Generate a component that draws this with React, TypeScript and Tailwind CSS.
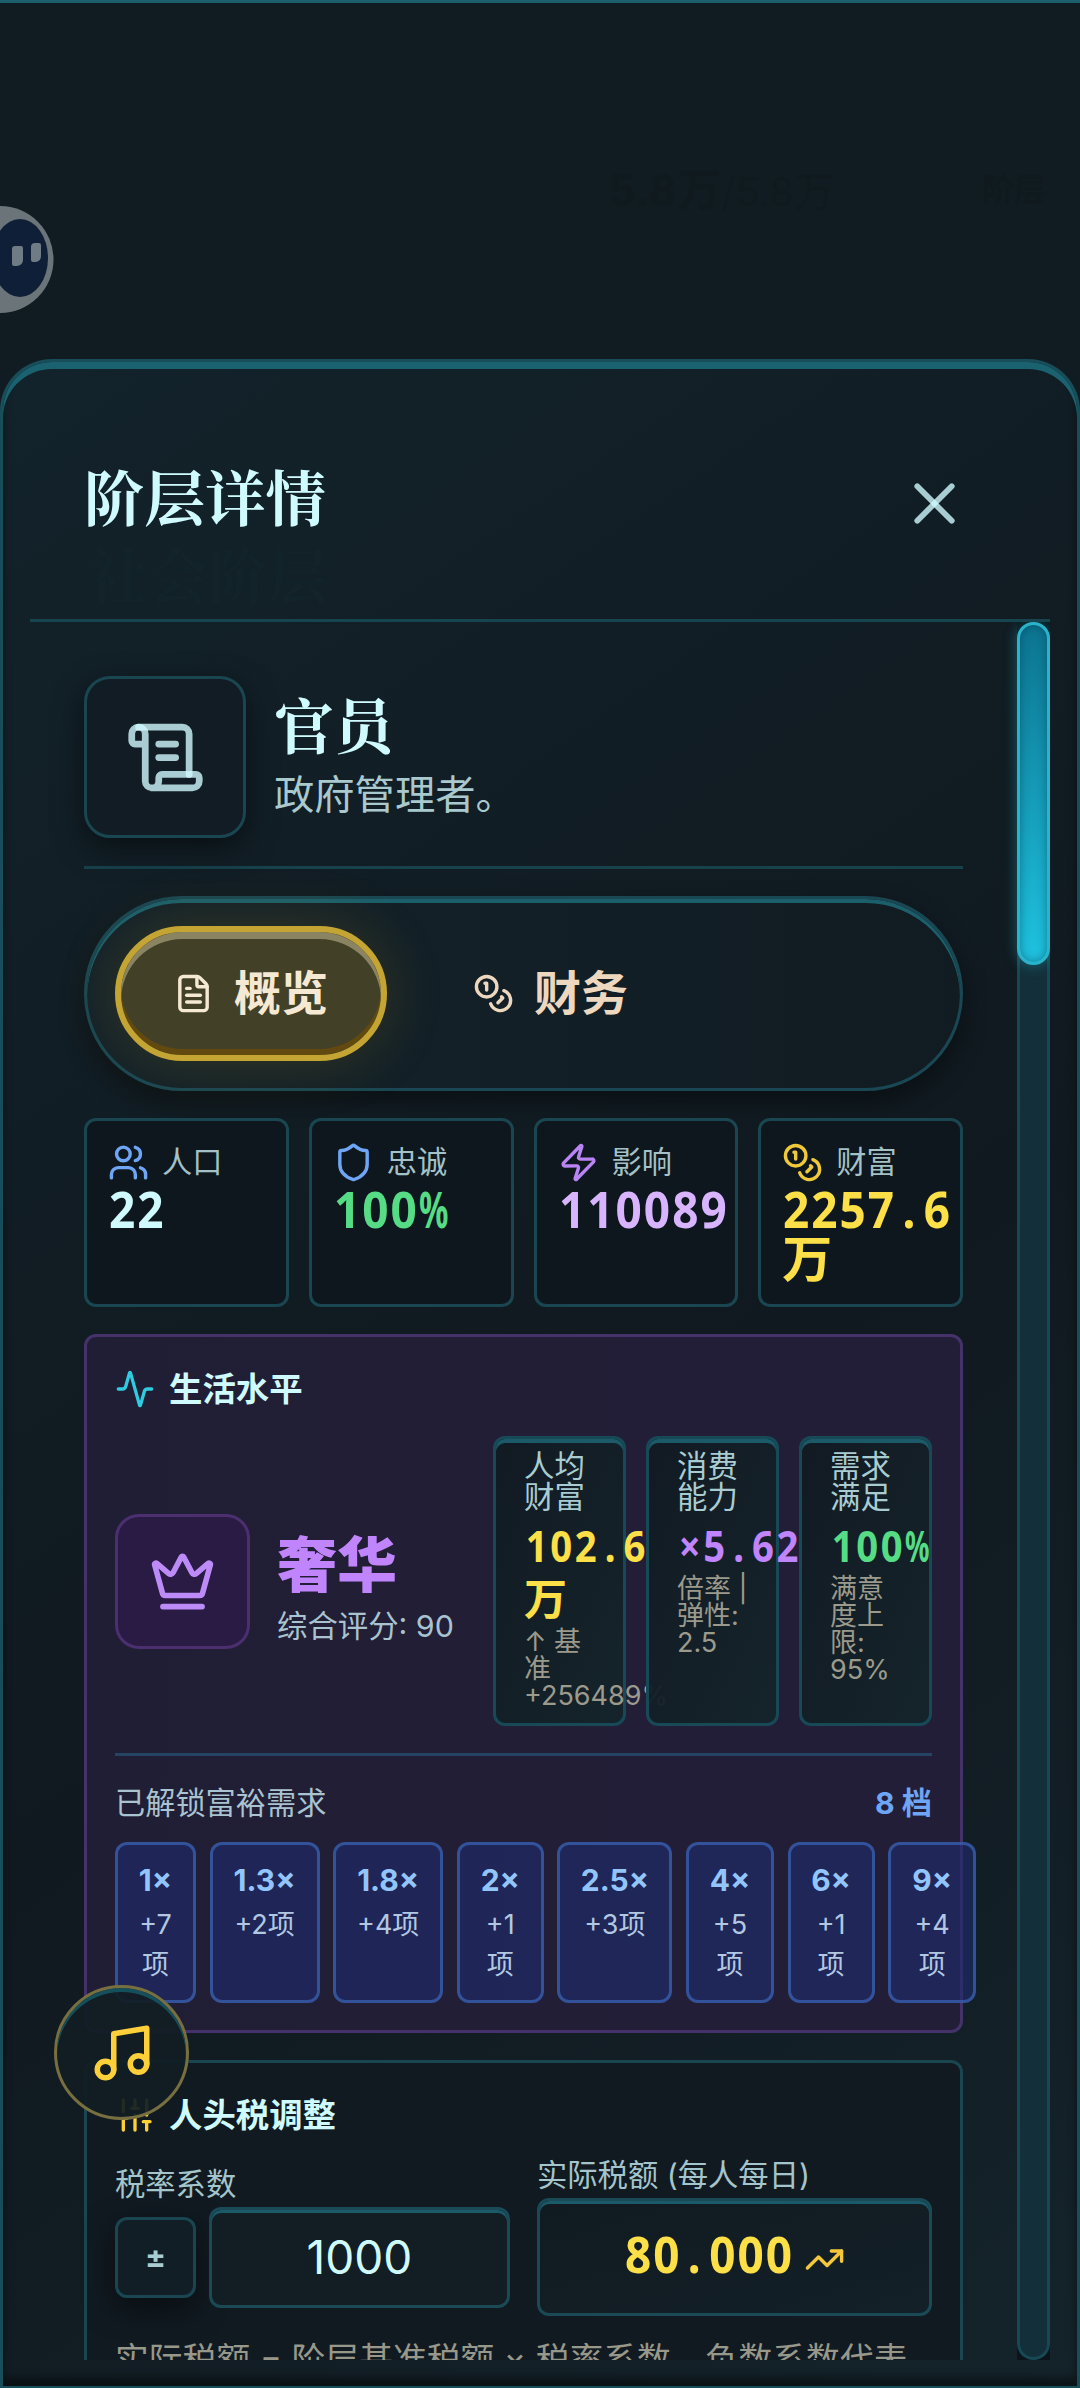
import type { ReactNode } from "react";
import {
  Activity,
  Crown,
  FileText,
  Music,
  ScrollText,
  Shield,
  SlidersVertical,
  TrendingUp,
  Users,
  X,
  Zap,
} from "lucide-react";

const CoinsIcon = ({ className }: { className?: string }) => (
  <svg
    className={className}
    viewBox="0 0 24 24"
    fill="none"
    stroke="currentColor"
    strokeWidth="2"
    strokeLinecap="round"
    strokeLinejoin="round"
  >
    <circle cx="8" cy="8" r="6" />
    <path d="M18.09 10.37A6 6 0 1 1 10.34 18" />
    <path d="M7 6h1v4" />
    <path d="m16.71 13.88.7.71-2.82 2.82" />
  </svg>
);

// narrow digits on a fixed pitch, the dot takes a full cell
const Digits = ({ value, small }: { value: string; small?: boolean }) => {
  const [whole, rest] = value.split(".");
  return (
    <span
      className={
        small
          ? "inline-block origin-left scale-x-90 whitespace-nowrap pl-[2px] font-['Noto_Sans'] text-[42.5px] font-bold tracking-[2.9px]"
          : "inline-block origin-left scale-x-90 whitespace-nowrap pl-[1px] font-['Noto_Sans'] text-[51px] font-bold tracking-[2.3px]"
      }
    >
      {whole}
      {rest && (
        <>
          <span className={small ? "px-[6px]" : "px-[7px]"}>.</span>
          {rest}
        </>
      )}
    </span>
  );
};

const Percent = ({ small }: { small?: boolean }) => (
  <span
    className={
      small
        ? "-ml-[9px] inline-block origin-left scale-x-[0.64] font-['Noto_Sans'] text-[42.5px] font-bold"
        : "-ml-[9px] inline-block origin-left scale-x-[0.64] font-['Noto_Sans'] text-[51px] font-bold"
    }
  >
    %
  </span>
);

const stats = [
  {
    label: "人口",
    icon: <Users className="size-[41px] text-[#6ea5f5]" />,
    color: "text-[#cffafe]",
    value: <Digits value="22" />,
  },
  {
    label: "忠诚",
    icon: <Shield className="size-[41px] text-[#6ea5f5]" />,
    color: "text-[#55dc85]",
    value: (
      <>
        <Digits value="100" />
        <Percent />
      </>
    ),
  },
  {
    label: "影响",
    icon: <Zap className="size-[41px] text-[#b985f5]" />,
    color: "text-[#d8b4fe]",
    value: <Digits value="110089" />,
  },
  {
    label: "财富",
    icon: <CoinsIcon className="size-[41px] text-[#f0c93a]" />,
    color: "text-[#fde047]",
    value: (
      <>
        <Digits value="2257.6" />
        <br />万
      </>
    ),
  },
];

const needs = [
  { level: "1×", count: "+7", wrap: true, width: "w-[81px]" },
  { level: "1.3×", count: "+2", wrap: false, width: "w-[110px]" },
  { level: "1.8×", count: "+4", wrap: false, width: "w-[110px]" },
  { level: "2×", count: "+1", wrap: true, width: "w-[87px]" },
  { level: "2.5×", count: "+3", wrap: false, width: "w-[115px]" },
  { level: "4×", count: "+5", wrap: true, width: "w-[88px]" },
  { level: "6×", count: "+1", wrap: true, width: "w-[87px]" },
  { level: "9×", count: "+4", wrap: true, width: "w-[88px]" },
];

const LivingCard = ({
  label,
  color,
  value,
  note,
}: {
  label: ReactNode;
  color: string;
  value: ReactNode;
  note: ReactNode;
}) => (
  <div className="relative w-[133px] rounded-xl border-3 border-[#174957] bg-linear-to-br from-[#111a21]/95 to-[#14242b]/95 pt-[12px] pl-[28px] shadow-[inset_0_4px_0_#1b5a69]">
    <div className="text-[30.4px] leading-[31px] whitespace-nowrap text-[#a9ccd3]">
      {label}
    </div>
    <div
      className={`mt-[6px] text-[43px] leading-[53px] font-bold whitespace-nowrap ${color}`}
    >
      {value}
    </div>
    <div className="mt-[2px] text-[27px] leading-[27px] whitespace-nowrap text-[#9b9a8c]">
      {note}
    </div>
  </div>
);

const LivingPanel = () => (
  <section className="shrink-0 rounded-xl border-3 border-[#46326a] bg-linear-to-r from-[#201e35] to-[#231e38] p-[28px] pb-[27px]">
    <div className="mb-[23px] flex h-[48px] items-center gap-[14px]">
      <Activity className="size-[40px] text-[#2fcbe0]" />
      <h3 className="text-[33.4px] font-bold text-[#cffafe]">生活水平</h3>
    </div>
    <div className="flex h-[290px] items-center">
      <div className="flex size-[135px] shrink-0 items-center justify-center rounded-3xl border-3 border-[#4b2f6e] bg-[#2a1b44]">
        <Crown className="size-[67px] text-[#bd8bf7]" />
      </div>
      <div className="ml-[27px] flex-1 pt-[17px]">
        <p className="text-[60px] leading-[72px] font-black text-[#c084fc]">
          奢华
        </p>
        <p className="text-[30.4px] leading-[50px] whitespace-nowrap text-[#a9c3d1]">
          综合评分: 90
        </p>
      </div>
      <div className="flex h-full shrink-0 gap-[20px]">
        <LivingCard
          label={
            <>
              人均
              <br />
              财富
            </>
          }
          color="text-[#fde047]"
          value={
            <>
              <Digits value="102.6" small />
              <br />万
            </>
          }
          note={
            <>
              ↑ 基<br />准<br />
              +256489%
            </>
          }
        />
        <LivingCard
          label={
            <>
              消费
              <br />
              能力
            </>
          }
          color="text-[#c084fc]"
          value={<Digits value="×5.62" small />}
          note={
            <>
              倍率 |<br />
              弹性:
              <br />
              2.5
            </>
          }
        />
        <LivingCard
          label={
            <>
              需求
              <br />
              满足
            </>
          }
          color="text-[#55dc85]"
          value={
            <>
              <Digits value="100" small />
              <Percent small />
            </>
          }
          note={
            <>
              满意
              <br />
              度上
              <br />
              限:
              <br />
              95%
            </>
          }
        />
      </div>
    </div>
    <div className="mt-[27px] border-t-3 border-[#254463] pt-[28px]">
      <div className="mb-[18px] flex h-[40px] items-center justify-between text-[30.2px]">
        <span className="text-[#a9c3d1]">已解锁富裕需求</span>
        <span className="font-bold text-[#6ea5f5]">8 档</span>
      </div>
      <div className="flex h-[161px] gap-[13.6px]">
        {needs.map((item) => (
          <div
            key={item.level}
            className={`shrink-0 rounded-xl border-3 border-[#3b65b8]/70 bg-[#1f2b6a]/65 pt-[15px] text-center leading-[40px] ${item.width}`}
          >
            <p className="text-[30px] font-bold text-[#93c5fd]">{item.level}</p>
            <p className="mt-[5px] text-[27px] text-[#b2c8e2]">
              {item.count}
              {item.wrap && <br />}项
            </p>
          </div>
        ))}
      </div>
    </div>
  </section>
);

const TaxPanel = () => (
  <section className="h-[500px] shrink-0 rounded-xl border-3 border-[#194651] bg-[#111a21] p-[28px]">
    <div className="mb-[15px] flex h-[48px] items-center gap-[14px]">
      <SlidersVertical className="size-[40px] text-[#fdd035]" />
      <h3 className="text-[33.4px] font-bold text-[#cffafe]">人头税调整</h3>
    </div>
    <div className="flex items-center gap-[27px]">
      <div className="w-[395px]">
        <p className="mb-[3px] pt-[1px] text-[30.3px] leading-[40px] text-[#a4c5cb]">
          税率系数
        </p>
        <div className="flex items-center gap-[13px]">
          <button className="size-[81px] shrink-0 rounded-xl border-3 border-[#194651] bg-[#121e25] text-[31px] font-bold text-[#a9ccd2] shadow-[0_10px_30px_rgba(0,0,0,0.5)]">
            ±
          </button>
          <div className="flex h-[101px] flex-1 items-center justify-center rounded-xl border-3 border-[#194a56] bg-[#121d24] text-[46px] text-[#cffafe] shadow-[inset_0_3px_0_#1b5a69]">
            1000
          </div>
        </div>
      </div>
      <div className="w-[395px]">
        <p className="mb-[3px] pt-[1px] text-[30.3px] leading-[40px] text-[#a4c5cb]">
          实际税额 (每人每日)
        </p>
        <div className="flex h-[118px] items-center rounded-xl border-3 border-[#194a56] bg-linear-to-br from-[#111a21] to-[#132027] pl-[84px] leading-none text-[#fde047] shadow-[inset_0_3px_0_#1b5a69]">
          <span className="pb-[8px]">
            <Digits value="80.000" />
          </span>
          <TrendingUp className="mt-[5px] -ml-[9px] size-[41px] text-[#f5c83c]" />
        </div>
      </div>
    </div>
    <p className="mt-[17px] text-[33.8px] leading-[54px] whitespace-nowrap text-[#97978a]">
      实际税额 = 阶层基准税额 × 税率系数，负数系数代表
    </p>
  </section>
);

// dimmed game screen that stays visible above the sheet
const Backdrop = () => (
  <div className="relative h-[359px] shrink-0 overflow-hidden border-t-3 border-[#1b5f6c]">
    <svg
      className="absolute top-0 left-0"
      width="60"
      height="320"
      viewBox="0 3 60 320"
    >
      <circle cx="0" cy="259.5" r="53.5" fill="#6b7479" />
      <ellipse cx="20" cy="258" rx="28" ry="39" fill="#0f1f37" />
      <path
        d="M15 246h6q2 0 2 2v12q0 5-6 6h-3q-2 0-2-2v-15q0-3 3-3z"
        fill="#6f7c85"
      />
      <path
        d="M35 243h4q2 0 2 2v11q0 5-5 6h-3q-2 0-2-2v-13q0-4 4-4z"
        fill="#6f7c85"
      />
    </svg>
    <div className="absolute top-[154px] left-[608px] text-[44px] font-bold whitespace-nowrap text-[#0f191e]">
      5.8万<span className="text-[40px] font-normal">/5.8万</span>
    </div>
    <div className="absolute top-[163px] left-[982px] text-[32px] font-bold whitespace-nowrap text-[#0f191e]">
      阶层
    </div>
  </div>
);

const App = () => {
  return (
    <div className="relative flex h-[2388px] w-[1080px] flex-col overflow-hidden bg-[#111c22] font-['Inter','Noto_Sans_CJK_SC',sans-serif]">
      <Backdrop />

      {/* bottom sheet */}
      <div className="flex flex-1 flex-col rounded-t-[52px] border-3 border-b-2 border-[#184d5a] bg-linear-[145deg,#13232b_0%,#111c23_35%,#10191f_55%,#14232a_100%] px-[27px] shadow-[inset_0_7px_0_#1b6270,inset_0_-8px_8px_rgba(0,0,0,0.45)]">
        <header className="relative flex h-[260px] shrink-0 items-center justify-between border-b-3 border-[#17454f] pt-[20px] pr-[81px] pl-[54px]">
          <h2 className="pb-[11px] font-['Noto_Serif_CJK_SC','Noto_Serif_SC','Source_Han_Serif_SC','Noto_Sans_CJK_SC',serif] text-[60.5px] leading-[70px] font-bold text-[#cffafe]">
            阶层详情
          </h2>
          <X className="mt-[5px] size-[69px] text-[#cffafe]/80" />
          <span className="absolute top-[176px] left-[58px] font-['Noto_Serif_CJK_SC','Noto_Serif_SC','Source_Han_Serif_SC','Noto_Sans_CJK_SC',serif] text-[60px] leading-[70px] font-bold text-[#13232a]">
            社会阶层
          </span>
        </header>

        <div className="flex h-[1738px] overflow-hidden">
          <main className="flex w-[987px] flex-col gap-[27px] px-[54px] pt-[54px]">
            <div className="flex shrink-0 gap-[28px] border-b-3 border-[#17414b] pb-[28px]">
              <div className="flex size-[162px] items-center justify-center rounded-[26px] border-3 border-[#194650] bg-[#111c24] shadow-[0_10px_30px_rgba(0,0,0,0.5)]">
                <ScrollText className="size-[81px] text-[#cffafe]/80" />
              </div>
              <div className="pt-[10px]">
                <h2 className="font-['Noto_Serif_CJK_SC','Noto_Serif_SC','Source_Han_Serif_SC','Noto_Sans_CJK_SC',serif] text-[60px] leading-[75px] font-bold text-[#cffafe]">
                  官员
                </h2>
                <p className="mt-[4px] text-[40.3px] leading-[60px] text-[#a9c9cf]">
                  政府管理者。
                </p>
              </div>
            </div>

            {/* tabs */}
            <div className="flex h-[195px] shrink-0 items-center gap-[28px] rounded-full border-3 border-[#194753] bg-linear-to-r from-[#13222a] to-[#111c22] pl-[28px] shadow-[inset_0_4px_0_#1b5f6b,0_10px_24px_rgba(0,0,0,0.4)]">
              <button className="flex h-[135px] w-[272px] items-center gap-[20px] rounded-full border-6 border-[#c4a433] bg-[#434028] pl-[52px] text-[47px] font-bold text-[#f6e9d3] shadow-[inset_0_7px_0_#8a8462,inset_0_-6px_0_#61490f,0_0_60px_rgba(200,150,20,0.2)]">
                <FileText className="size-[41px] shrink-0" />
                <span className="whitespace-nowrap">概览</span>
              </button>
              <button className="flex h-[135px] items-center gap-[20px] pl-[58px] text-[47px] font-bold text-[#edd8bf]">
                <CoinsIcon className="size-[41px]" />
                财务
              </button>
            </div>

            {/* stats */}
            <div className="grid shrink-0 grid-cols-4 gap-[20px]">
              {stats.map((item) => (
                <div
                  key={item.label}
                  className="h-[189px] min-w-0 rounded-xl border-3 border-[#194651] bg-[#0f171e] pt-[20px] pl-[21px]"
                >
                  <div className="flex h-[43px] items-center gap-[13px]">
                    {item.icon}
                    <span className="text-[30.2px] text-[#a3c1c6]">
                      {item.label}
                    </span>
                  </div>
                  <div
                    className={`text-[50px] leading-[49px] font-bold whitespace-nowrap ${item.color}`}
                  >
                    {item.value}
                  </div>
                </div>
              ))}
            </div>

            <LivingPanel />
            <TaxPanel />
          </main>

          {/* scrollbar */}
          <div className="h-full w-[33px] bg-[#0a1419]">
            <div className="h-full rounded-full border-x-3 border-b-3 border-[#174853] bg-[#13303a]">
              <div className="-mx-[3px] h-[343px] rounded-full border-3 border-[#2bb3cb] bg-linear-to-b from-[#0c7490] to-[#1fc3e0] shadow-[inset_0_0_10px_rgba(0,60,80,0.5),0_0_14px_rgba(34,211,238,0.35)]" />
            </div>
          </div>
        </div>
      </div>

      {/* floating music toggle */}
      <button className="absolute top-[1985px] left-[54px] flex size-[135px] items-center justify-center rounded-full border-3 border-[#776f40] bg-[#111d23]/93 shadow-[inset_0_4px_0_#14505c]">
        <Music className="size-[66px] text-[#fdcf38]" />
      </button>
    </div>
  );
};

export default App;
